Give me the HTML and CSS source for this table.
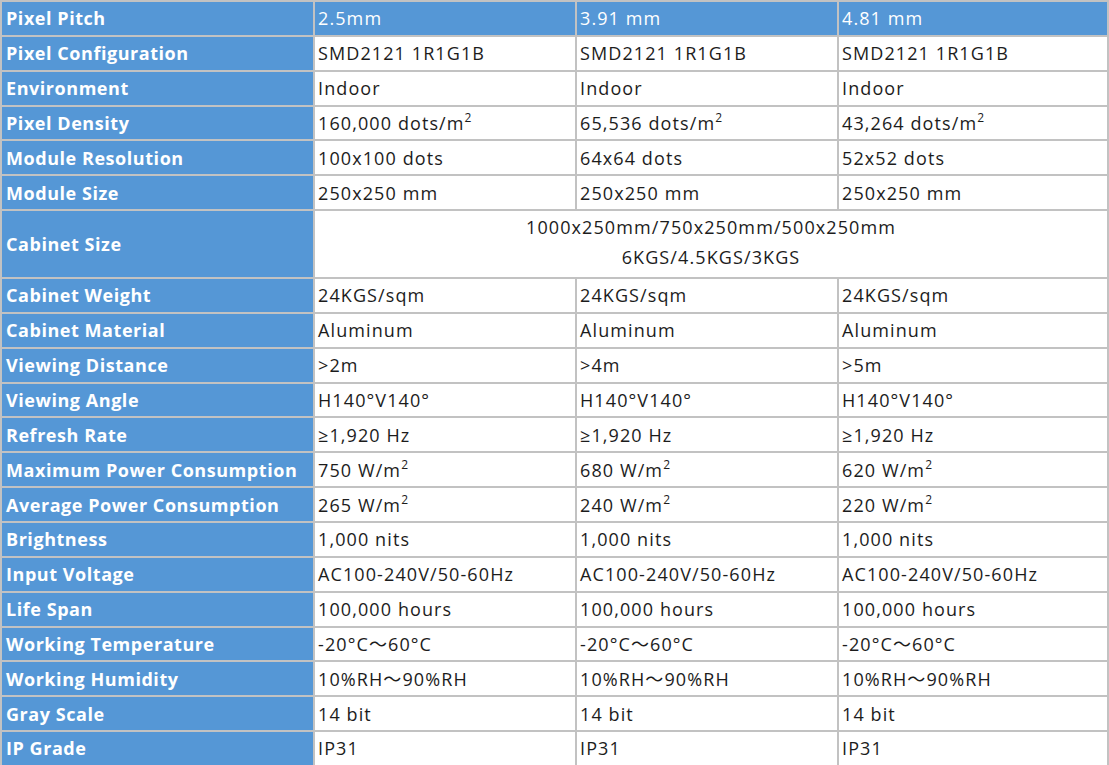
FILE: index.html
```html
<!DOCTYPE html>
<html>
<head>
<meta charset="utf-8">
<link rel="stylesheet" href="styles.css">
</head>
<body>
<table class="spec">
<colgroup><col class="c1"><col class="c2"><col class="c3"><col class="c4"></colgroup>
<tbody>
<tr class="head"><th>Pixel Pitch</th><td>2.5mm</td><td>3.91 mm</td><td>4.81 mm</td></tr>
<tr><th>Pixel Configuration</th><td>SMD2121 1R1G1B</td><td>SMD2121 1R1G1B</td><td>SMD2121 1R1G1B</td></tr>
<tr><th>Environment</th><td>Indoor</td><td>Indoor</td><td>Indoor</td></tr>
<tr><th>Pixel Density</th><td>160,000 dots/m<sup>2</sup></td><td>65,536 dots/m<sup>2</sup></td><td>43,264 dots/m<sup>2</sup></td></tr>
<tr><th>Module Resolution</th><td>100x100 dots</td><td>64x64 dots</td><td>52x52 dots</td></tr>
<tr><th>Module Size</th><td>250x250 mm</td><td>250x250 mm</td><td>250x250 mm</td></tr>
<tr class="tall"><th>Cabinet Size</th><td colspan="3" class="center">1000x250mm/750x250mm/500x250mm<br>6KGS/4.5KGS/3KGS</td></tr>
<tr><th>Cabinet Weight</th><td>24KGS/sqm</td><td>24KGS/sqm</td><td>24KGS/sqm</td></tr>
<tr><th>Cabinet Material</th><td>Aluminum</td><td>Aluminum</td><td>Aluminum</td></tr>
<tr><th>Viewing Distance</th><td>&gt;2m</td><td>&gt;4m</td><td>&gt;5m</td></tr>
<tr><th>Viewing Angle</th><td>H140°V140°</td><td>H140°V140°</td><td>H140°V140°</td></tr>
<tr><th>Refresh Rate</th><td>≥1,920 Hz</td><td>≥1,920 Hz</td><td>≥1,920 Hz</td></tr>
<tr><th>Maximum Power Consumption</th><td>750 W/m<sup>2</sup></td><td>680 W/m<sup>2</sup></td><td>620 W/m<sup>2</sup></td></tr>
<tr><th>Average Power Consumption</th><td>265 W/m<sup>2</sup></td><td>240 W/m<sup>2</sup></td><td>220 W/m<sup>2</sup></td></tr>
<tr><th>Brightness</th><td>1,000 nits</td><td>1,000 nits</td><td>1,000 nits</td></tr>
<tr><th>Input Voltage</th><td>AC100-240V/50-60Hz</td><td>AC100-240V/50-60Hz</td><td>AC100-240V/50-60Hz</td></tr>
<tr><th>Life Span</th><td>100,000 hours</td><td>100,000 hours</td><td>100,000 hours</td></tr>
<tr><th>Working Temperature</th><td>-20°C～60°C</td><td>-20°C～60°C</td><td>-20°C～60°C</td></tr>
<tr><th>Working Humidity</th><td>10%RH～90%RH</td><td>10%RH～90%RH</td><td>10%RH～90%RH</td></tr>
<tr><th>Gray Scale</th><td>14 bit</td><td>14 bit</td><td>14 bit</td></tr>
<tr><th>IP Grade</th><td>IP31</td><td>IP31</td><td>IP31</td></tr>
</tbody>
</table>
</body>
</html>
```

FILE: styles.css
```css
html, body {
  margin: 0;
  padding: 0;
  background: #ffffff;
  overflow: hidden;
}

.spec {
  width: 1109px;
  table-layout: fixed;
  border-collapse: separate;
  border-spacing: 2px;
  background: #c2c2c2;
  font-family: "Open Sans", "Noto Sans", "Noto Sans CJK SC", sans-serif;
  font-size: 18px;
}

.c1 { width: 311px; }
.c2 { width: 260px; }
.c3 { width: 260px; }
.c4 { width: 268px; }

.spec th,
.spec td {
  height: 32.85px;
  padding: 0 0 0 3px;
  vertical-align: middle;
  white-space: nowrap;
  line-height: 30px;
  overflow: hidden;
}

.spec th {
  background: #5597d6;
  color: #ffffff;
  font-weight: 700;
  font-size: 18px;
  letter-spacing: 0.55px;
  text-align: left;
  padding-left: 4px;
}

.spec td {
  background: #ffffff;
  color: #1c1c1c;
  font-weight: 400;
  letter-spacing: 1.1px;
}

.spec .head td {
  background: #5597d6;
  color: #ffffff;
}

.spec .tall th,
.spec .tall td {
  height: 65px;
}

.spec .tall .center {
  text-align: center;
  vertical-align: top;
  padding: 1px 0 0 0;
}

.spec sup {
  font-size: 12px;
  line-height: 0;
  vertical-align: 8px;
  letter-spacing: 0;
}
```
